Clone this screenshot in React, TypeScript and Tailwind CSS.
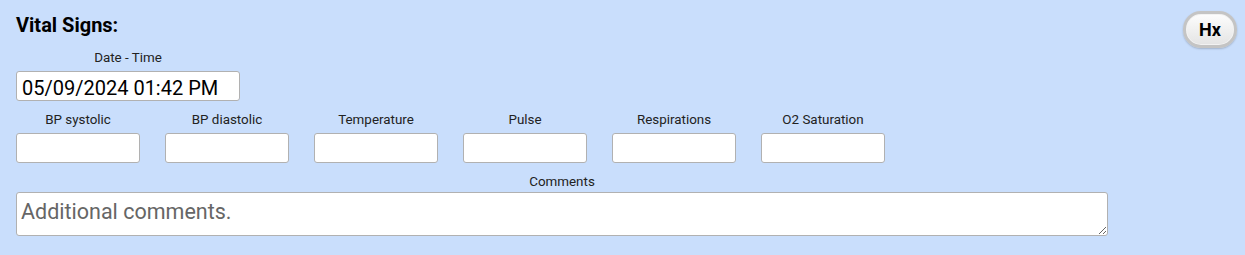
import { useState } from "react";

const vitals = ["BP systolic", "BP diastolic", "Temperature", "Pulse", "Respirations", "O2 Saturation"];

const VitalField = ({ label }: { label: string }) => {
  const [value, setValue] = useState("");
  return (
    <div className="flex w-[124px] flex-col items-center">
      <label className="mb-[5px] h-4 text-[13.4px] leading-4 text-[#222]">{label}</label>
      <input
        type="text"
        value={value}
        onChange={(e) => setValue(e.target.value)}
        className="h-[30px] w-full rounded-[3px] border border-[#b1b1b1] bg-white px-[5px] text-[16px] outline-none"
      />
    </div>
  );
};

export default function App() {
  const [dateTime, setDateTime] = useState("05/09/2024 01:42 PM");
  const [comments, setComments] = useState("");

  return (
    <div className="relative min-h-[255px] w-full bg-[#c9defc] pl-4 pt-[13px] font-['Roboto','Liberation_Sans',sans-serif] text-black">
      {/* History button */}
      <button className="absolute right-[8px] top-[11px] flex h-[37px] w-[54px] items-center justify-center rounded-[18px] border-[3px] border-[#c4c4c4] bg-gradient-to-b from-[#fdfdfd] to-[#e4e4e4] text-[18px] font-bold text-black shadow-[0_1px_2px_rgba(0,0,0,0.2),inset_0_0_0_1px_#f2f2f2]">
        Hx
      </button>

      <h2 className="text-[20px] font-bold leading-6">Vital Signs:</h2>

      {/* Date - Time */}
      <div className="mt-[13px] flex w-[224px] flex-col items-center">
        <label className="mb-[5px] h-4 text-[13.4px] leading-4 text-[#222]">Date - Time</label>
        <input
          type="text"
          value={dateTime}
          onChange={(e) => setDateTime(e.target.value)}
          className="h-[30px] w-full rounded-[3px] border border-[#b1b1b1] bg-white pl-[5px] pr-1 pt-[3px] text-[20px] text-black outline-none"
        />
      </div>

      {/* Vitals row */}
      <div className="mt-[11px] flex gap-[25px]">
        {vitals.map((v) => (
          <VitalField key={v} label={v} />
        ))}
      </div>

      {/* Comments */}
      <div className="mt-[11px] flex w-[1092px] flex-col items-center">
        <label className="mb-[2px] h-4 text-[13.4px] leading-4 text-[#222]">Comments</label>
        <textarea
          value={comments}
          onChange={(e) => setComments(e.target.value)}
          placeholder="Additional comments."
          className="block h-[44px] w-full rounded-[3px] border border-[#b1b1b1] bg-white px-[4px] pt-[3px] text-[21.5px] leading-normal text-black outline-none placeholder:text-[#666]"
        />
      </div>
    </div>
  );
}
